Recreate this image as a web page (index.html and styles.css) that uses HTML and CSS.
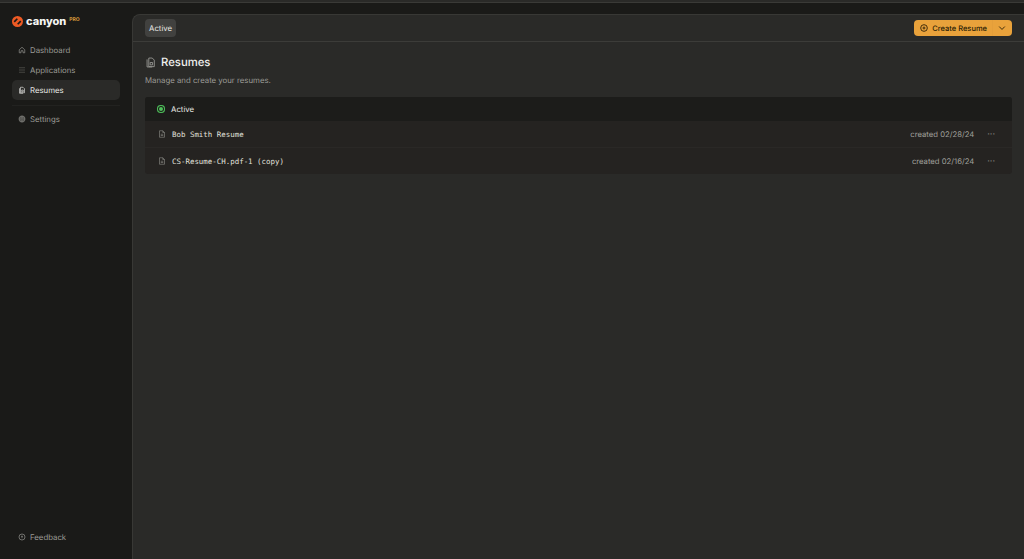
FILE: index.html
```html
<!DOCTYPE html>
<html lang="en">
<head>
  <meta charset="UTF-8" />
  <title>Resumes – Canyon</title>
  <link rel="stylesheet" href="styles.css">
</head>
<body>
  <div class="topstrip"></div>
  <div class="app">

    <!-- Sidebar -->
    <aside class="sidebar">
      <div class="logo">
        <svg class="logo-mark" width="11" height="11" viewBox="0 0 12 12">
          <circle cx="6" cy="6" r="6" fill="#ee5a24"/>
          <path d="M2.4 6.400 L5.800 3 M6.200 9 L9.600 5.600" stroke="#1a1a18" stroke-width="1.900" fill="none"/>
        </svg>
        <span class="logo-name">canyon</span>
        <span class="logo-pro">PRO</span>
      </div>

      <nav class="nav">
        <a class="nav-item">
          <svg class="nav-icon" viewBox="0 0 16 16"><path d="M2.500 7.500 8 2.500l5.500 5v6h-3.500v-4H6v4H2.500z"/></svg>
          Dashboard
        </a>
        <a class="nav-item">
          <svg class="nav-icon dim" viewBox="0 0 16 16"><path d="M2 3.500h12M2 8h12M2 12.500h12"/></svg>
          Applications
        </a>
        <a class="nav-item active">
          <svg class="nav-icon" viewBox="0 0 16 16"><path d="M5 2.500h5l3 3v8H5zM3 4.500v10h7M7.500 8h3v3.500h-3z"/></svg>
          Resumes
        </a>
        <div class="nav-divider"></div>
        <a class="nav-item">
          <svg class="nav-icon thick" viewBox="0 0 16 16"><circle cx="8" cy="8" r="5.500"/><circle cx="8" cy="8" r="2.500"/></svg>
          Settings
        </a>
      </nav>

      <a class="nav-item feedback">
        <svg class="nav-icon" viewBox="0 0 16 16"><circle cx="8" cy="8" r="6"/><path d="M6 6.500h4M8 6.500v4"/></svg>
        Feedback
      </a>
    </aside>

    <!-- Main panel -->
    <main class="panel">
      <header class="panel-bar">
        <span class="tab">Active</span>
        <div class="create-btn">
          <span class="create-main">
            <svg width="8" height="8" viewBox="0 0 12 12"><circle cx="6" cy="6" r="5" fill="none" stroke="#2a1c05" stroke-width="1.300"/><path d="M3.800 6h4.400M6 3.800v4.400" stroke="#2a1c05" stroke-width="1.300"/></svg>
            Create Resume
          </span>
          <span class="create-caret">
            <svg width="8" height="8" viewBox="0 0 10 10"><path d="M1.500 3.200 5 6.800l3.500-3.600" fill="none" stroke="#2a1c05" stroke-width="1.100"/></svg>
          </span>
        </div>
      </header>

      <section class="content">
        <div class="title-row">
          <svg class="title-icon" viewBox="0 0 16 16"><path d="M5.500 1.500h5l3 3v9.500h-8zM3 3.500v11h7.500M7.500 8h3.500v3.500h-3.500z"/></svg>
          <h1>Resumes</h1>
        </div>
        <p class="subtitle">Manage and create your resumes.</p>

        <div class="list">
          <div class="list-head">
            <span class="status-dot"></span>
            Active
          </div>
          <div class="row">
            <svg class="file-icon" viewBox="0 0 16 16"><path d="M3 1.500h6.500l3.500 3.500v9.500H3zM9.500 1.500V5H13M5.500 8.500h5M5.500 11h5"/></svg>
            <span class="row-name">Bob Smith Resume</span>
            <span class="row-date">created 02/28/24</span>
            <span class="row-more">···</span>
          </div>
          <div class="row">
            <svg class="file-icon" viewBox="0 0 16 16"><path d="M3 1.500h6.500l3.500 3.500v9.500H3zM9.500 1.500V5H13M5.500 8.500h5M5.500 11h5"/></svg>
            <span class="row-name">CS-Resume-CH.pdf-1 (copy)</span>
            <span class="row-date">created 02/16/24</span>
            <span class="row-more">···</span>
          </div>
        </div>
      </section>
    </main>

  </div>
</body>
</html>
```

FILE: styles.css
```css
* {
  box-sizing: border-box;
}

html, body {
  height: 100%;
}

body {
  margin: 0;
  background: #1a1a18;
  color: #e6e6e3;
  font-family: 'Inter', sans-serif;
  font-size: 7.8px;
  text-rendering: geometricPrecision;
  overflow: hidden;
}

.topstrip {
  height: 3px;
  background: #2a2a28;
  border-bottom: 1px solid #3a3a37;
}

.app {
  display: flex;
  height: 556px;
}

.sidebar {
  width: 132px;
  flex-shrink: 0;
  padding: 10px 12px 12px;
  display: flex;
  flex-direction: column;
}

.logo {
  display: flex;
  align-items: center;
  height: 16px;
}

.logo-mark {
  margin-right: 3px;
}

.logo-name {
  font-size: 11px;
  font-weight: 800;
  color: #f5f5f2;
}

.logo-pro {
  margin-left: 3px;
  margin-top: -2px;
  font-size: 5px;
  font-weight: 700;
  color: #d99a3a;
}

.nav {
  margin-top: 11px;
  flex: 1;
}

.nav-item {
  display: flex;
  align-items: center;
  gap: 4px;
  height: 20px;
  padding-left: 6px;
  color: #9a9a96;
  border-radius: 5px;
}

.nav-item.active {
  background: #2a2a28;
  color: #e6e6e3;
}

.nav-divider {
  height: 1px;
  margin: 5px 0 3px;
  background: #222220;
}

.nav-icon {
  width: 8px;
  height: 8px;
  fill: none;
  stroke: currentColor;
  stroke-width: 1.300;
}

.nav-icon.dim {
  stroke: #5c5c58;
}

.nav-icon.thick {
  stroke: #6e6e6a;
  stroke-width: 2.600;
}

.feedback {
  flex-shrink: 0;
}

.panel {
  flex: 1;
  margin-top: 11px;
  background: #2a2a28;
  border: 1px solid #383835;
  border-right: 0;
  border-bottom: 0;
  border-top-left-radius: 8px;
}

.panel-bar {
  display: flex;
  justify-content: space-between;
  align-items: center;
  height: 27px;
  padding: 0 12px;
  border-bottom: 1px solid #3c3c39;
}

.tab {
  display: flex;
  align-items: center;
  height: 18px;
  padding: 0 4px;
  background: #41413f;
  border-radius: 4px;
  color: #e6e6e3;
}

.create-btn {
  display: flex;
  align-items: center;
  height: 16px;
  background: #e9a23b;
  border-radius: 4px;
  color: #2a1c05;
  font-size: 7.500px;
  font-weight: 500;
}

.create-main {
  display: flex;
  align-items: center;
  gap: 4px;
  padding: 0 5px 0 6px;
}

.create-caret {
  display: flex;
  align-items: center;
  height: 100%;
  padding: 0 6px 0 5px;
  border-left: 1px solid #e49e3a;
}

.content {
  padding: 13px 12px;
}

.title-row {
  display: flex;
  align-items: center;
  gap: 5px;
  height: 14px;
}

.title-icon {
  width: 11px;
  height: 11px;
  fill: none;
  stroke: #a0a09c;
  stroke-width: 1.200;
}

h1 {
  margin: 0;
  font-size: 11.300px;
  font-weight: 500;
  color: #f0f0ed;
}

.subtitle {
  margin: 6px 0 11px;
  color: #9a9a96;
  line-height: 11px;
}

.list {
  background: #252321;
  border-radius: 3px;
}

.list-head {
  display: flex;
  align-items: center;
  gap: 6px;
  height: 24px;
  padding-left: 12px;
  background: #1c1c1a;
  border-radius: 3px 3px 0 0;
}

.status-dot {
  width: 8px;
  height: 8px;
  border-radius: 50%;
  background: #4fc15b;
  box-shadow: inset 0 0 0 1px #4fc15b, inset 0 0 0 2px #1c1c1a;
}

.row {
  display: flex;
  align-items: center;
  height: 27px;
  padding: 0 17px 0 13px;
  border-bottom: 1px solid #2a2826;
}

.row:last-child {
  height: 26px;
  border-bottom: 0;
}

.file-icon {
  width: 8px;
  height: 8px;
  fill: none;
  stroke: #8e8e8a;
  stroke-width: 1.200;
  margin-right: 6px;
}

.row-name {
  flex: 1;
  font-family: 'DejaVu Sans Mono', monospace;
  font-size: 7.450px;
  color: #e0e0dc;
}

.row-date {
  font-size: 7.700px;
  color: #a0a09c;
  margin-right: 13px;
}

.row-more {
  color: #82827e;
  font-size: 9px;
}
```
